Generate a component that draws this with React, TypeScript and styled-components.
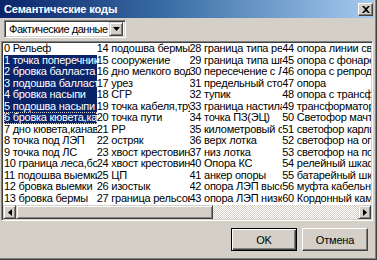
import styled, { createGlobalStyle } from 'styled-components'

const GlobalStyle = createGlobalStyle`
  html, body {
    margin: 0;
    padding: 0;
    background: #d4d0c8;
  }
  * {
    box-sizing: border-box;
  }
`

const Window = styled.div`
  width: 377px;
  height: 260px;
  background: #d4d0c8;
  padding: 0 3px 2px 0;
  box-shadow: inset -1px -1px 0 #404040, inset -2px -2px 0 #808080;
  display: flex;
  flex-direction: column;
  font-family: "Liberation Sans", Arial, sans-serif;
  font-size: 11px;
  letter-spacing: -0.25px;
  color: #000;
  overflow: hidden;
`

const TitleBar = styled.div`
  height: 18px;
  flex: none;
  background: linear-gradient(to right, #0a246a 0%, #3a6ea5 45%, #a6caf0 100%);
  display: flex;
  align-items: center;
  justify-content: space-between;
  padding: 0 1px 0 4px;
`

const Title = styled.span`
  color: #fff;
  font-weight: bold;
  font-size: 11px;
  letter-spacing: -0.1px;
`

const CloseButton = styled.div`
  width: 15px;
  height: 13px;
  background: #d4d0c8;
  border: 1px solid;
  border-color: #ffffff #404040 #404040 #ffffff;
  box-shadow: inset -1px -1px 0 #808080;
  display: flex;
  align-items: center;
  justify-content: center;
`

const Content = styled.div`
  flex: 1;
  display: flex;
  flex-direction: column;
  padding: 2px 0 0 1px;
`

const Combo = styled.div`
  margin-left: 3px;
  width: 122px;
  height: 18px;
  background: #fff;
  border: 1px solid;
  border-color: #808080 #ffffff #ffffff #808080;
  box-shadow: inset 1px 1px 0 #404040, inset -1px -1px 0 #d4d0c8;
  display: flex;
  align-items: center;
  padding: 2px;
`

const ComboText = styled.span`
  flex: 1;
  padding-left: 2px;
  white-space: nowrap;
  overflow: hidden;
  letter-spacing: -0.45px;
`

const ArrowButton = styled.div`
  width: 14px;
  height: 14px;
  background: #d4d0c8;
  border: 1px solid;
  border-color: #d4d0c8 #404040 #404040 #d4d0c8;
  box-shadow: inset 1px 1px 0 #ffffff, inset -1px -1px 0 #808080;
  display: flex;
  align-items: center;
  justify-content: center;
`

const ListBox = styled.div`
  margin-top: 3px;
  width: 372px;
  height: 180px;
  background: #fff;
  border: 1px solid;
  border-color: #808080 #ffffff #ffffff #808080;
  box-shadow: inset 1px 1px 0 #404040, inset -1px -1px 0 #d4d0c8;
  padding: 1px;
  display: flex;
  flex-direction: column;
  overflow: hidden;
`

const Items = styled.div`
  flex: 1;
  display: grid;
  grid-template-rows: repeat(14, 11.5px);
  grid-auto-flow: column;
  grid-auto-columns: 92.75px;
  overflow: hidden;
  padding-left: 1px;
`

const Item = styled.div<{ $selected?: boolean; $focused?: boolean }>`
  white-space: nowrap;
  overflow: hidden;
  line-height: 11.5px;
  background: ${p => (p.$selected ? '#0a246a' : 'transparent')};
  color: ${p => (p.$selected ? '#fff' : '#000')};
  outline: ${p => (p.$focused ? '1px dotted #d4d0c8' : 'none')};
  outline-offset: -1px;
`

const ScrollBar = styled.div`
  height: 14px;
  flex: none;
  display: flex;
  background-color: #eeede9;
  background-image: repeating-conic-gradient(#d4d0c8 0 25%, #ffffff 0 50%);
  background-size: 2px 2px;
`

const ScrollButton = styled.div`
  width: 13px;
  height: 14px;
  flex: none;
  background: #d4d0c8;
  border: 1px solid;
  border-color: #d4d0c8 #404040 #404040 #d4d0c8;
  box-shadow: inset 1px 1px 0 #ffffff, inset -1px -1px 0 #808080;
  display: flex;
  align-items: center;
  justify-content: center;
`

const Thumb = styled.div`
  width: 197px;
  height: 14px;
  background: #d4d0c8;
  border: 1px solid;
  border-color: #d4d0c8 #404040 #404040 #d4d0c8;
  box-shadow: inset 1px 1px 0 #ffffff, inset -1px -1px 0 #808080;
`

const Track = styled.div`
  flex: 1;
`

const Footer = styled.div`
  flex: 1;
  display: flex;
  justify-content: flex-end;
  align-items: flex-start;
  gap: 5px;
  padding: 7px 6px 0 0;
`

const Button = styled.button<{ $default?: boolean }>`
  width: 66px;
  height: 23px;
  background: #d4d0c8;
  font-family: inherit;
  font-size: 11px;
  letter-spacing: -0.2px;
  color: #000;
  padding: 0;
  border: 1px solid;
  border-color: ${p => (p.$default ? '#000' : '#ffffff #404040 #404040 #ffffff')};
  box-shadow: ${p =>
    p.$default
      ? 'inset 1px 1px 0 #ffffff, inset -1px -1px 0 #404040, inset -2px -2px 0 #808080'
      : 'inset -1px -1px 0 #808080'};
`

const columns: string[][] = [
  [
    '0 Рельеф',
    '1 точка поперечника',
    '2 бровка балласта',
    '3 подошва балласта',
    '4 бровка насыпи',
    '5 подошва насыпи',
    '6 бровка кювета,канавы',
    '7 дно кювета,канавы',
    '8 точка под ЛЭП',
    '9 точка под ЛС',
    '10 граница леса,болота',
    '11 подошва выемки',
    '12 бровка выемки',
    '13 бровка бермы',
  ],
  [
    '14 подошва бермы',
    '15 сооружение',
    '16 дно мелкого водоема',
    '17 урез',
    '18 СГР',
    '19 точка кабеля,трубы',
    '20 точка пути',
    '21 РР',
    '22 остряк',
    '23 хвост крестовины',
    '24 хвост крестовины',
    '25 ЦП',
    '26 изостык',
    '27 граница рельсов',
  ],
  [
    '28 граница типа рельсов',
    '29 граница типа шпал',
    '30 пересечение с ЛЭП',
    '31 предельный столбик',
    '32 тупик',
    '33 граница настила',
    '34 точка ПЗ(ЭЦ)',
    '35 километровый столб',
    '36 верх лотка',
    '37 низ лотка',
    '40 Опора КС',
    '41 анкер опоры',
    '42 опора ЛЭП высоковольтная',
    '43 опора ЛЭП низковольтная',
  ],
  [
    '44 опора линии связи',
    '45 опора с фонарем',
    '46 опора с репродуктором',
    '47 опора',
    '48 опора с трансформатором',
    '49 трансформатор',
    '50 Светофор мачтовый',
    '51 светофор карлик',
    '52 светофор на опоре',
    '53 светофор на поп',
    '54 релейный шкаф',
    '55 батарейный шкаф',
    '56 муфта кабельная',
    '60 Кордонный камень',
  ],
  [
    '61 колодец',
    '62 люк',
    '63 столб',
    '64 знак',
    '65 пикет',
    '66 репер',
    '67 стрелка',
    '68 будка',
    '69 ограждение',
    '70 переезд',
    '71 платформа',
    '72 мост',
    '73 труба',
    '74 тоннель',
  ],
]

const App = () => {
  return (
    <Window>
      <GlobalStyle />
      <TitleBar>
        <Title>Семантические коды</Title>
        <CloseButton>
          <svg width="8" height="7" viewBox="0 0 8 7">
            <path d="M0 0h2l2 2 2-2h2L5 3.5 8 7H6L4 5 2 7H0l3-3.5z" fill="#000" />
          </svg>
        </CloseButton>
      </TitleBar>
      <Content>
        <Combo>
          <ComboText>Фактические данные</ComboText>
          <ArrowButton>
            <svg width="7" height="4" viewBox="0 0 7 4">
              <path d="M0 0h7L3.5 4z" fill="#000" />
            </svg>
          </ArrowButton>
        </Combo>
        <ListBox>
          <Items>
            {columns.map((col, c) =>
              col.map((text, r) => (
                <Item
                  key={`${c}-${r}`}
                  $selected={c === 0 && r >= 1 && r <= 6}
                  $focused={c === 0 && r === 6}
                >
                  {text}
                </Item>
              ))
            )}
          </Items>
          <ScrollBar>
            <ScrollButton>
              <svg width="4" height="7" viewBox="0 0 4 7">
                <path d="M4 0v7L0 3.5z" fill="#000" />
              </svg>
            </ScrollButton>
            <Thumb />
            <Track />
            <ScrollButton>
              <svg width="4" height="7" viewBox="0 0 4 7">
                <path d="M0 0v7l4-3.5z" fill="#000" />
              </svg>
            </ScrollButton>
          </ScrollBar>
        </ListBox>
        <Footer>
          <Button $default>OK</Button>
          <Button>Отмена</Button>
        </Footer>
      </Content>
    </Window>
  )
}

export default App
